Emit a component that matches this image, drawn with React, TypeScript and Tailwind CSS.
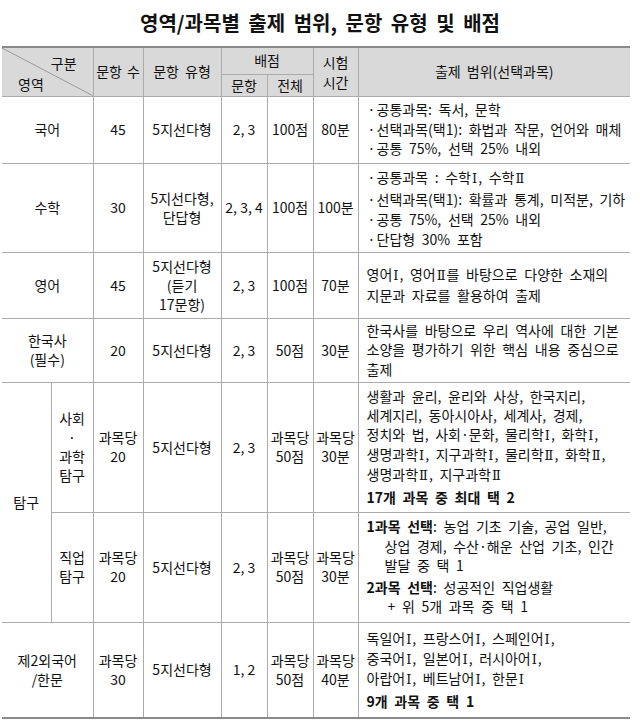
import type { ReactNode } from 'react';

const cell = 'border border-[#ababab] p-0 text-center align-middle';
const head = 'border border-[#ababab] bg-[#d9d9d9] p-0 text-center align-middle font-normal';
const scope =
  'border border-[#ababab] border-r-0 py-0 pl-[8px] pr-0 text-left align-middle leading-[19.5px] [word-spacing:3.5px]';
const last = 'border-b-2 border-b-[#8a8a8a]';

// Roman numerals get a narrower serif face, like the source document
function R({ t }: { t: string }) {
  const parts = t.split(/([ⅠⅡ])/);
  return (
    <>
      {parts.map((p, i) =>
        p === 'Ⅰ' || p === 'Ⅱ' ? (
          <span key={i} className="px-[1px] font-['DejaVu_Serif',serif] text-[13px]">
            {p}
          </span>
        ) : (
          <span key={i}>{p}</span>
        ),
      )}
    </>
  );
}

function Bullets({ items }: { items: string[] }) {
  return (
    <div>
      {items.map((t) => (
        <div key={t} className="flex whitespace-nowrap">
          <span className="w-[10px] text-center">·</span>
          <span>
            <R t={t} />
          </span>
        </div>
      ))}
    </div>
  );
}

function Lines({ items, className = '' }: { items: ReactNode[]; className?: string }) {
  return (
    <div className={className}>
      {items.map((t, i) => (
        <div key={i} className="whitespace-nowrap">
          {typeof t === 'string' ? <R t={t} /> : t}
        </div>
      ))}
    </div>
  );
}

function Stack({ items, lh = 'leading-[19px]' }: { items: string[]; lh?: string }) {
  return (
    <div className={lh}>
      {items.map((t, i) => (
        <div key={i} className="whitespace-nowrap">
          {t}
        </div>
      ))}
    </div>
  );
}

export default function App() {
  return (
    <div className="min-h-[724px] bg-white font-['Noto_Sans_CJK_KR','Noto_Sans',sans-serif] text-[14px] text-[#111]">
      <div className="flex h-[46px] items-center justify-center text-[20px] font-bold [word-spacing:4px]">
        영역/과목별 출제 범위, 문항 유형 및 배점
      </div>

      <table className="ml-[2px] w-[628px] table-fixed border-collapse">
        <colgroup>
          <col className="w-[49px]" />
          <col className="w-[42px]" />
          <col className="w-[50px]" />
          <col className="w-[78px]" />
          <col className="w-[46px]" />
          <col className="w-[46px]" />
          <col className="w-[45px]" />
          <col className="w-[272px]" />
        </colgroup>
        <thead>
          <tr className="h-[27px]">
            <th rowSpan={2} colSpan={2} className={`${head} relative border-t-2 border-l-0 border-t-[#8a8a8a]`}>
              <svg className="absolute inset-0 h-full w-full" preserveAspectRatio="none" viewBox="0 0 100 100">
                <line x1="0" y1="0" x2="100" y2="100" stroke="#9a9a9a" strokeWidth="1" vectorEffect="non-scaling-stroke" />
              </svg>
              <div className="relative flex h-[46px] flex-col justify-between px-[14px] py-[4px]">
                <span className="self-end pr-[2px]">구분</span>
                <span className="self-start pl-[2px]">영역</span>
              </div>
            </th>
            <th rowSpan={2} className={`${head} border-t-2 border-t-[#8a8a8a] whitespace-nowrap [word-spacing:2px]`}>
              문항 수
            </th>
            <th rowSpan={2} className={`${head} border-t-2 border-t-[#8a8a8a] [word-spacing:3px]`}>
              문항 유형
            </th>
            <th colSpan={2} className={`${head} border-t-2 border-t-[#8a8a8a]`}>
              배점
            </th>
            <th rowSpan={2} className={`${head} border-t-2 border-t-[#8a8a8a] leading-[20px]`}>
              시험
              <br />
              시간
            </th>
            <th rowSpan={2} className={`${head} border-t-2 border-r-0 border-t-[#8a8a8a] [word-spacing:3px]`}>
              출제 범위(선택과목)
            </th>
          </tr>
          <tr className="h-[21px]">
            <th className={head}>문항</th>
            <th className={head}>전체</th>
          </tr>
        </thead>
        <tbody>
          <tr className="h-[67px]">
            <td colSpan={2} className={`${cell} border-l-0`}>국어</td>
            <td className={cell}>45</td>
            <td className={cell}>5지선다형</td>
            <td className={cell}>2, 3</td>
            <td className={cell}>100점</td>
            <td className={cell}>80분</td>
            <td className={scope}>
              <Bullets items={['공통과목: 독서, 문학', '선택과목(택1): 화법과 작문, 언어와 매체', '공통 75%, 선택 25% 내외']} />
            </td>
          </tr>
          <tr className="h-[89px]">
            <td colSpan={2} className={`${cell} border-l-0`}>수학</td>
            <td className={cell}>30</td>
            <td className={cell}>
              <Stack items={['5지선다형,', '단답형']} />
            </td>
            <td className={`${cell} whitespace-nowrap`}>2, 3, 4</td>
            <td className={cell}>100점</td>
            <td className={cell}>100분</td>
            <td className={`${scope} leading-[20px]`}>
              <Bullets items={['공통과목 : 수학Ⅰ, 수학Ⅱ', '선택과목(택1): 확률과 통계, 미적분, 기하', '공통 75%, 선택 25% 내외', '단답형 30% 포함']} />
            </td>
          </tr>
          <tr className="h-[66px]">
            <td colSpan={2} className={`${cell} border-l-0`}>영어</td>
            <td className={cell}>45</td>
            <td className={cell}>
              <Stack items={['5지선다형', '(듣기', '17문항)']} />
            </td>
            <td className={cell}>2, 3</td>
            <td className={cell}>100점</td>
            <td className={cell}>70분</td>
            <td className={scope}>
              <Lines items={['영어Ⅰ, 영어Ⅱ를 바탕으로 다양한 소재의', '지문과 자료를 활용하여 출제']} />
            </td>
          </tr>
          <tr className="h-[64px]">
            <td colSpan={2} className={`${cell} border-l-0`}>
              <Stack items={['한국사', '(필수)']} />
            </td>
            <td className={cell}>20</td>
            <td className={cell}>5지선다형</td>
            <td className={cell}>2, 3</td>
            <td className={cell}>50점</td>
            <td className={cell}>30분</td>
            <td className={scope}>
              <Lines items={['한국사를 바탕으로 우리 역사에 대한 기본', '소양을 평가하기 위한 핵심 내용 중심으로', '출제']} />
            </td>
          </tr>
          <tr className="h-[130px]">
            <td rowSpan={2} className={`${cell} border-l-0`}>탐구</td>
            <td className={cell}>
              <Stack items={['사회', '·', '과학', '탐구']} />
            </td>
            <td className={cell}>
              <Stack items={['과목당', '20']} />
            </td>
            <td className={cell}>5지선다형</td>
            <td className={cell}>2, 3</td>
            <td className={cell}>
              <Stack items={['과목당', '50점']} />
            </td>
            <td className={cell}>
              <Stack items={['과목당', '30분']} />
            </td>
            <td className={scope}>
              <Lines
                className="leading-[19px]"
                items={[
                  '생활과 윤리, 윤리와 사상, 한국지리,',
                  '세계지리, 동아시아사, 세계사, 경제,',
                  '정치와 법, 사회·문화, 물리학Ⅰ, 화학Ⅰ,',
                  '생명과학Ⅰ, 지구과학Ⅰ, 물리학Ⅱ, 화학Ⅱ,',
                  '생명과학Ⅱ, 지구과학Ⅱ',
                ]}
              />
              <div className="mt-[3px] font-bold whitespace-nowrap">17개 과목 중 최대 택 2</div>
            </td>
          </tr>
          <tr className="h-[110px]">
            <td className={cell}>
              <Stack items={['직업', '탐구']} />
            </td>
            <td className={cell}>
              <Stack items={['과목당', '20']} />
            </td>
            <td className={cell}>5지선다형</td>
            <td className={cell}>2, 3</td>
            <td className={cell}>
              <Stack items={['과목당', '50점']} />
            </td>
            <td className={cell}>
              <Stack items={['과목당', '30분']} />
            </td>
            <td className={scope}>
              <Lines
                className="leading-[19.5px]"
                items={[
                  <>
                    <b>1과목 선택</b>: 농업 기초 기술, 공업 일반,
                  </>,
                  <span className="pl-[18px]">상업 경제, 수산·해운 산업 기초, 인간</span>,
                  <span className="pl-[18px]">발달 중 택 1</span>,
                ]}
              />
              <Lines
                className="mt-[2px] leading-[19.5px]"
                items={[
                  <>
                    <b>2과목 선택</b>: 성공적인 직업생활
                  </>,
                  <span className="pl-[21px]">+ 위 5개 과목 중 택 1</span>,
                ]}
              />
            </td>
          </tr>
          <tr className="h-[96px]">
            <td colSpan={2} className={`${cell} ${last} border-l-0`}>
              <Stack items={['제2외국어', '/한문']} />
            </td>
            <td className={`${cell} ${last}`}>
              <Stack items={['과목당', '30']} />
            </td>
            <td className={`${cell} ${last}`}>5지선다형</td>
            <td className={`${cell} ${last}`}>1, 2</td>
            <td className={`${cell} ${last}`}>
              <Stack items={['과목당', '50점']} />
            </td>
            <td className={`${cell} ${last}`}>
              <Stack items={['과목당', '40분']} />
            </td>
            <td className={`${scope} ${last}`}>
              <Lines
                className="leading-[19px]"
                items={['독일어Ⅰ, 프랑스어Ⅰ, 스페인어Ⅰ,', '중국어Ⅰ, 일본어Ⅰ, 러시아어Ⅰ,', '아랍어Ⅰ, 베트남어Ⅰ, 한문Ⅰ']}
              />
              <div className="mt-[3px] font-bold whitespace-nowrap">9개 과목 중 택 1</div>
            </td>
          </tr>
        </tbody>
      </table>
    </div>
  );
}
